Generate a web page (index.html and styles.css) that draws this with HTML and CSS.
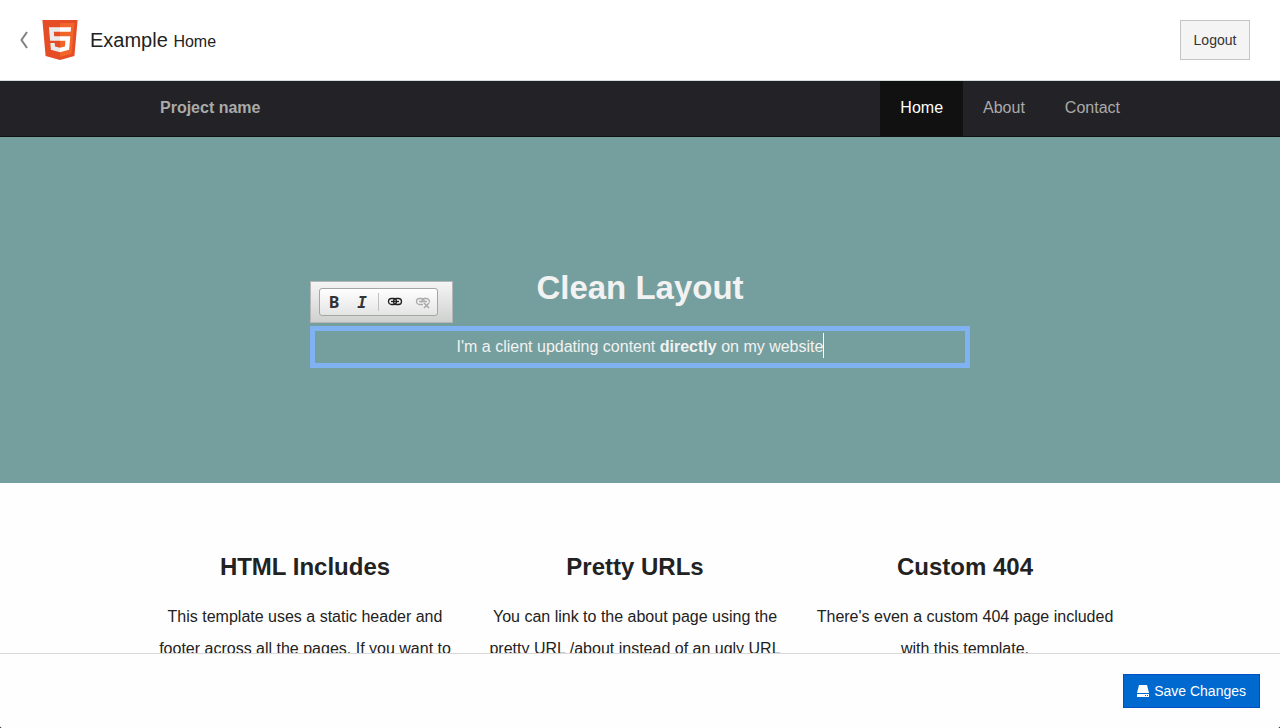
FILE: index.html
```html
<!DOCTYPE html>
<html lang="en">
<head>
<meta charset="utf-8">
<title>Example Home</title>
<link rel="stylesheet" href="styles.css">
</head>
<body>
<div class="app">
  <header class="topbar">
    <a class="back" href="#" aria-label="Back">
      <svg width="8" height="18" viewBox="0 0 8 18" fill="none" stroke="#808080" stroke-width="2"><path d="M7 1 1.500 9 7 17"/></svg>
    </a>
    <svg class="logo" width="36" height="40" viewBox="30 0 451 512" aria-hidden="true">
      <path fill="#e44d26" d="M71 460 30 0h451l-41 460-185 52z"/>
      <path fill="#f16529" d="m256 472 149-41 35-394H256z"/>
      <path fill="#ebebeb" d="M256 208h-75l-5-58h80V94H114l1 15 14 156h127zM256 355l-64-17-4-45h-56l7 89 117 32z"/>
      <path fill="#fff" d="M255 208v57h70l-7 73-63 17v59l117-32 1-10 13-149 1-15zM255 94v56h137l1-12 3-29 1-15z"/>
    </svg>
    <h1 class="site">Example <small class="page-name">Home</small></h1>
    <button class="logout" type="button">Logout</button>
  </header>

  <main class="preview">
    <nav class="navbar">
      <div class="container navbar-inner">
        <a class="brand" href="#">Project name</a>
        <a class="nav-link active" href="#">Home</a>
        <a class="nav-link" href="#">About</a>
        <a class="nav-link" href="#">Contact</a>
      </div>
    </nav>

    <section class="hero">
      <h2 class="hero-title">Clean Layout</h2>
      <div class="editor">
        <div class="toolbar" role="toolbar" aria-label="Formatting">
          <div class="tool-group">
            <button class="tool bold" type="button" aria-label="Bold">B</button>
            <button class="tool italic" type="button" aria-label="Italic">I</button>
            <span class="divider"></span>
            <button class="tool" type="button" aria-label="Link">
              <svg width="16" height="16" viewBox="0 0 16 16" fill="none" stroke="#222" stroke-width="1.300"><rect x="1.500" y="4.500" width="8" height="6" rx="3"/><rect x="6.500" y="4.500" width="8" height="6" rx="3"/><path d="M4 7.500h8"/></svg>
            </button>
            <button class="tool" type="button" aria-label="Unlink" disabled>
              <svg width="16" height="16" viewBox="0 0 16 16" fill="none" stroke="#aaa" stroke-width="1.300"><path d="M8 10.500H4.500a3 3 0 0 1 0-6h2a3 3 0 0 1 2.800 2.200M7 8.500a3 3 0 0 1 2.500-4h2a3 3 0 0 1 2.800 4M4 7.500h8"/><path stroke-width="1.600" d="m9 9 5 5m0-5-5 5"/></svg>
            </button>
          </div>
        </div>
        <p class="editable" contenteditable="true">I'm a client updating content <strong>directly</strong> on my website<span class="caret"></span></p>
      </div>
    </section>

    <div class="container features">
      <section class="feature">
        <h3>HTML Includes</h3>
        <p>This template uses a static header and footer across all the pages. If you want to</p>
      </section>
      <section class="feature">
        <h3>Pretty URLs</h3>
        <p>You can link to the about page using the pretty URL /about instead of an ugly URL</p>
      </section>
      <section class="feature">
        <h3>Custom 404</h3>
        <p>There's even a custom 404 page included with this template.</p>
      </section>
    </div>
  </main>

  <footer class="actions">
    <button class="save" type="button">
      <svg width="12" height="12" viewBox="0 0 12 12" aria-hidden="true"><path fill="#fff" d="M2 0h8l2 8H0zM0 9h12v3H0z"/><path fill="#0069d0" d="M8 10h1v1H8zM10 10h1v1h-1z"/></svg>
      Save Changes
    </button>
  </footer>
</div>
</body>
</html>
```
FILE: styles.css
```css
* {
  box-sizing: border-box;
}

html {
  background: #222;
}

body {
  margin: 0;
  font-family: "Liberation Sans", Arial, sans-serif;
  font-size: 16px;
  color: #222;
}

h1, h2, h3, p {
  margin: 0;
}

a {
  text-decoration: none;
}

button {
  font-family: inherit;
}

.app {
  display: flex;
  flex-direction: column;
  height: 100vh;
  overflow: hidden;
  background: #fefefe;
  border-radius: 0 0 3px 3px;
}

.topbar {
  display: flex;
  align-items: center;
  flex: none;
  padding: 20px 30px 20px 20px;
  background: #fff;
  border-bottom: 1px solid #d5dcdb;
}

.back {
  display: flex;
}

.logo {
  margin: 0 12px 0 14px;
}

.site {
  flex: 1;
  font-size: 20px;
  font-weight: 400;
}

.page-name {
  font-size: 16px;
}

.logout {
  height: 40px;
  padding: 0 12px;
  min-width: 70px;
  border: 1px solid #c4c4c4;
  background: #f4f4f4;
  color: #333;
  font-size: 14px;
}

.preview {
  flex: 1;
  min-height: 0;
  overflow: hidden;
}

.container {
  max-width: 1000px;
  margin: 0 auto;
}

.navbar {
  background: #232227;
  border-bottom: 1px solid #111;
}

.navbar-inner {
  display: flex;
  line-height: 53px;
}

.brand,
.nav-link {
  padding: 0 20px 2px;
  color: #aaa;
}

.brand {
  margin-right: auto;
  font-weight: 700;
}

.nav-link.active {
  background: #111;
  color: #fff;
}

.hero {
  padding: 128px 20px 115px;
  background: #759f9e;
  color: #f2f2f2;
  text-align: center;
}

.hero-title {
  font-size: 33px;
  line-height: 46px;
}

.editor {
  position: relative;
  max-width: 660px;
  margin: 15px auto 0;
}

.editable {
  border: 5px solid #80b2f1;
  line-height: 32px;
  outline: 0;
}

.caret {
  display: inline-block;
  width: 1px;
  height: 25px;
  margin-right: -1px;
  background: #fff;
  vertical-align: -6px;
}

.toolbar {
  position: absolute;
  bottom: 45px;
  left: 0;
  padding: 6px 14px 6px 8px;
  border: 1px solid #b6b6b6;
  background: linear-gradient(#f5f5f5, #cfd1cf);
}

.tool-group {
  display: flex;
  align-items: center;
  border: 1px solid #a6a6a6;
  border-radius: 3px;
  background: linear-gradient(#fff, #e4e4e4);
}

.tool {
  display: flex;
  align-items: center;
  justify-content: center;
  width: 28px;
  height: 26px;
  padding: 0;
  border: 0;
  background: none;
  color: #333;
  font-size: 16px;
  font-weight: 700;
}

.bold {
  font-family: "Noto Sans", sans-serif;
}

.italic {
  font-family: "DejaVu Sans Mono", monospace;
  font-style: italic;
}

.divider {
  width: 1px;
  height: 18px;
  margin: 0 2px;
  background: #c0c0c0;
}

.features {
  display: grid;
  grid-template-columns: repeat(3, 33%);
  padding-top: 64px;
}

.feature {
  padding: 0 15px;
  text-align: center;
}

.feature h3 {
  margin-bottom: 14px;
  font-size: 24px;
  line-height: 40px;
}

.feature p {
  line-height: 32px;
}

.actions {
  display: flex;
  justify-content: flex-end;
  flex: none;
  padding: 20px;
  border-top: 1px solid #d9d9d9;
  background: #fefefe;
}

.save {
  display: flex;
  align-items: center;
  gap: 5px;
  height: 34px;
  padding: 0 13px;
  border: 1px solid #004fc4;
  background: #0069d0;
  color: #fff;
  font-size: 14px;
}
```
